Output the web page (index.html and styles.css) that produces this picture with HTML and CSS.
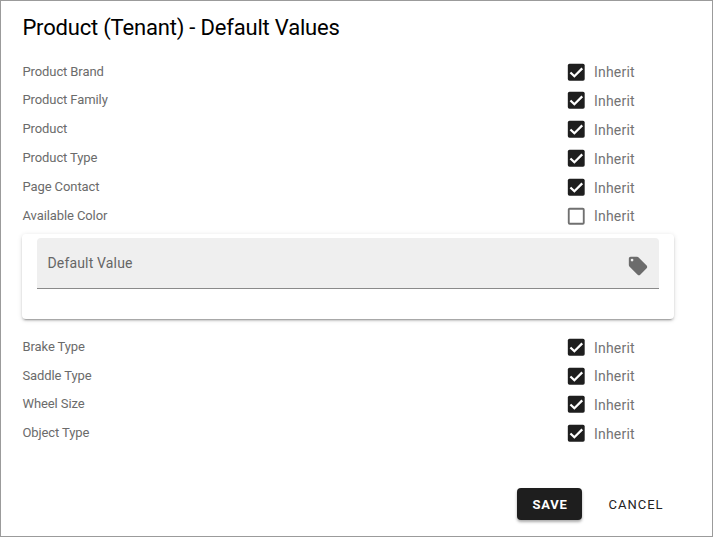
FILE: index.html
```html
<!DOCTYPE html>
<html lang="en">
<head>
<meta charset="utf-8">
<title>Product (Tenant) - Default Values</title>
<link rel="stylesheet" href="styles.css">
</head>
<body>
<main class="dialog">
<h1>Product (Tenant) - Default Values</h1>
<div class="rows">
<div class="row"><span class="name">Product Brand</span><label class="inherit"><svg class="box" viewBox="0 0 24 24"><use href="#checked"/></svg><span>Inherit</span></label></div>
<div class="row"><span class="name raised">Product Family</span><label class="inherit"><svg class="box" viewBox="0 0 24 24"><use href="#checked"/></svg><span>Inherit</span></label></div>
<div class="row"><span class="name">Product</span><label class="inherit"><svg class="box" viewBox="0 0 24 24"><use href="#checked"/></svg><span>Inherit</span></label></div>
<div class="row"><span class="name">Product Type</span><label class="inherit"><svg class="box" viewBox="0 0 24 24"><use href="#checked"/></svg><span>Inherit</span></label></div>
<div class="row"><span class="name">Page Contact</span><label class="inherit"><svg class="box" viewBox="0 0 24 24"><use href="#checked"/></svg><span>Inherit</span></label></div>
<div class="row"><span class="name">Available Color</span><label class="inherit"><svg class="box off" viewBox="0 0 24 24"><use href="#unchecked"/></svg><span>Inherit</span></label></div>
</div>
<section class="card">
<div class="field"><span>Default Value</span><svg class="tag" viewBox="0 0 24 24"><path d="M5.500 7A1.500 1.500 0 0 1 4 5.500 1.500 1.500 0 0 1 5.500 4 1.500 1.500 0 0 1 7 5.500 1.500 1.500 0 0 1 5.500 7M21.410 11.580l-9-9C12.050 2.220 11.550 2 11 2H4c-1.110 0-2 .89-2 2v7c0 .55.22 1.050.59 1.410l9 9c.36.36.86.59 1.410.59s1.050-.23 1.410-.59l7-7c.37-.36.59-.86.59-1.410 0-.56-.23-1.060-.59-1.420z"/></svg></div>
</section>
<div class="rows">
<div class="row"><span class="name">Brake Type</span><label class="inherit"><svg class="box" viewBox="0 0 24 24"><use href="#checked"/></svg><span>Inherit</span></label></div>
<div class="row"><span class="name">Saddle Type</span><label class="inherit"><svg class="box" viewBox="0 0 24 24"><use href="#checked"/></svg><span>Inherit</span></label></div>
<div class="row"><span class="name raised">Wheel Size</span><label class="inherit"><svg class="box" viewBox="0 0 24 24"><use href="#checked"/></svg><span>Inherit</span></label></div>
<div class="row"><span class="name">Object Type</span><label class="inherit"><svg class="box" viewBox="0 0 24 24"><use href="#checked"/></svg><span>Inherit</span></label></div>
</div>
<footer class="actions"><button class="save">SAVE</button><button class="cancel">CANCEL</button></footer>
</main>
<svg class="defs"><defs>
<symbol id="checked" viewBox="0 0 24 24"><rect x="3" y="3" width="18" height="18" rx="1.800"/><path d="M5.800 12.300l4.200 4L18.400 7.900" fill="none" stroke="#fff" stroke-width="2.400"/></symbol>
<symbol id="unchecked" viewBox="0 0 24 24"><path d="M19 3H5c-1.110 0-2 .89-2 2v14a2 2 0 0 0 2 2h14a2 2 0 0 0 2-2V5a2 2 0 0 0-2-2m0 2v14H5V5h14z"/></symbol>
</defs></svg>
</body>
</html>
```
FILE: styles.css
```css
* { box-sizing: border-box; }
body { margin: 0; background: #fff; font-family: Roboto, sans-serif; overflow: hidden; }
.dialog { height: 537px; border: 1px solid #9b9b9b; padding: 11px 38px 0 21px; }
h1 { margin: 0; height: 45.5px; padding-left: .4px; font-size: 22px; line-height: 32px; font-weight: 400; letter-spacing: -.19px; color: #000; }
.row { display: flex; height: 28.8px; align-items: center; }
.name { width: 543px; padding-left: .5px; font-size: 13px; line-height: 20px; letter-spacing: -.1px; color: #6b6b6b; }
.raised { padding-bottom: 1px; }
.inherit { display: flex; align-items: center; font-size: 14px; line-height: 20px; letter-spacing: .2px; color: #737373; }
.inherit span { padding-top: 1px; }
.box { width: 22.500px; height: 22.500px; margin-right: 6.5px; fill: #1e1e1e; }
.off { fill: #707070; }
.card { height: 85px; margin: 3.5px 0 13.9px; padding: 4px 15px; border-radius: 4px; box-shadow: 0 3px 1px -2px #0003, 0 2px 2px #0002, 0 1px 5px #0002; }
.field { height: 51px; display: flex; align-items: center; justify-content: space-between; padding: 0 10px 0 10.5px; border-radius: 4px 4px 0 0; border-bottom: 1px solid #8a8a8a; background: #efefef; font-size: 14px; letter-spacing: .16px; color: #666; }
.tag { width: 22px; height: 22px; margin-top: 6px; fill: #6c6c6c; }
.actions { display: flex; justify-content: flex-end; margin-top: 40.1px; }
button { font: 400 13px/31px Roboto, sans-serif; letter-spacing: 1px; height: 32px; padding: 1px 0 0 1px; border: 0; border-radius: 4px; background: none; }
.save { width: 65px; background: #1e1e1e; color: #fff; font-weight: 700; letter-spacing: .8px; box-shadow: 0 2px 3px #0005; }
.cancel { width: 77px; margin-left: 15px; color: #222; }
.defs { display: none; }
```
